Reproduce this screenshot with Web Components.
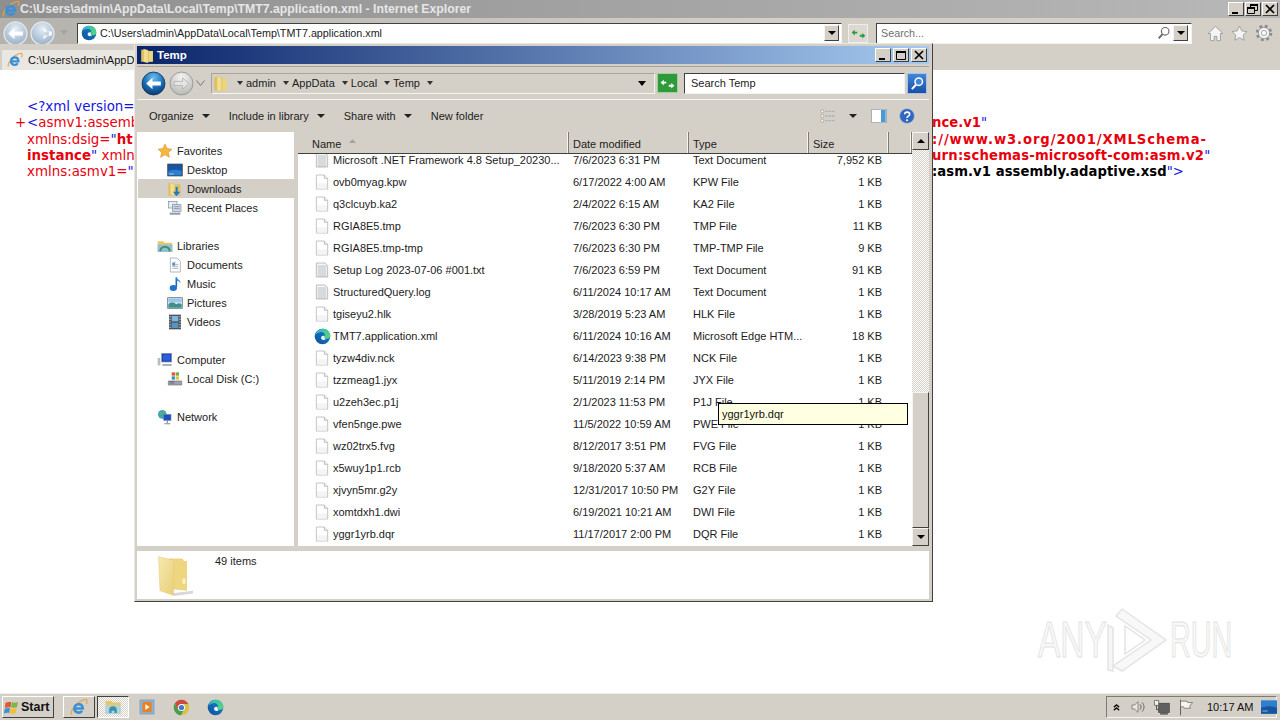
<!DOCTYPE html>
<html>
<head>
<meta charset="utf-8">
<title>TMT7.application.xml</title>
<style>
    html, body { margin: 0; padding: 0; width: 1280px; height: 720px; overflow: hidden; background: #fff; }
    body { display: flex; flex-direction: column; font-family: "Liberation Sans", sans-serif; }
</style>
</head>
<body>
<ie-window>
    <explorer-window slot="overlay"></explorer-window>
</ie-window>
<task-bar></task-bar>

<script>
const UI_FONT = '"Liberation Sans", Arial, sans-serif';

const ICONS = {
    ie: `<path d="M2 22C0 17 9 5 20 2c3-1 3 2 2 6" fill="none" stroke="#e8a33a" stroke-width="1.600"/><path d="M17 14h-11c0-7 10-8 11-1v1zM6 14c0 6 8 7 10 3" fill="none" stroke="#3d8fd8" stroke-width="3.400"/>`,
    edge: `<defs><linearGradient id="eb" x1="0" y1="1" x2="1" y2="0"><stop offset="0" stop-color="#0b4f9e"/><stop offset="1" stop-color="#1a86d0"/></linearGradient><linearGradient id="eg" x1="0" y1="0" x2="1" y2="1"><stop offset="0" stop-color="#2fb9c9"/><stop offset="1" stop-color="#5fd86f"/></linearGradient></defs><circle cx="12" cy="12" r="11" fill="url(#eb)"/><path d="M2 10C4 3 10 1 13 1c6 0 10 5 10 10 0 3-3 5-6 4-2-.7-2-2-1.500-3.500C16 7 12 5 8.500 6 5 7 3 8 2 10z" fill="url(#eg)"/><path d="M10 14c0-3 3-4 5-2.500-.5 1.500 0 3 1.500 3.500-1 2.500-6.500 2.500-6.500-1z" fill="#eef6fb"/>`,
    chrome: `<circle cx="12" cy="12" r="11" fill="#d8c04a"/><path d="M12 1a11 11 0 0 0-9.500 5.500L7.500 15 12 7h9.500A11 11 0 0 0 12 1z" fill="#cf4a3c"/><path d="M2.500 6.500A11 11 0 0 0 11 23l4.500-8-8 0z" fill="#4a9c50"/><circle cx="12" cy="12" r="5" fill="#fff"/><circle cx="12" cy="12" r="3.700" fill="#3f78d0"/>`,
    folder: `<path d="M2 4h7l2 2h11v16H2z" fill="#dcbf62"/><path d="M6 3l8 2v19l-8-2z" fill="#f2de8e" stroke="#cdb05a" stroke-width=".5"/><path d="M15 6h7v16h-7z" fill="#eed67e"/>`,
    bigFolder: `<defs><linearGradient id="bf" x1="0" y1="0" x2="1" y2="1"><stop offset="0" stop-color="#f7eab0"/><stop offset="1" stop-color="#e8cf78"/></linearGradient></defs><path d="M9 22.500L24 21v1.500L11 24z" fill="#d8d8d8"/><path d="M8 2.500h9l1 1.500h2v17L8 20z" fill="#eed680"/><path d="M1 1.500l10 2v20l-9-2.500z" fill="url(#bf)" stroke="#e2c870" stroke-width=".3"/><path d="M17 14h2v3h-2z" fill="#f9f0c4"/>`,
    doc: `<path d="M3.500 1.500h12l5 5v16h-17z" fill="#fff" stroke="#a8a8a8"/><path d="M15.500 1.500v5h5" fill="#ececec" stroke="#a8a8a8"/><path d="M4.500 14h15v8h-15z" fill="#f4f4f4"/>`,
    txt: `<path d="M3.500 1.500h13l4 4v17h-17z" fill="#f6f6f6" stroke="#a0a0a0"/><path d="M5.500 6h13M5.500 9h13M5.500 12h13M5.500 15h13M5.500 18h13M5.500 21h13" stroke="#9aa0a8" stroke-width="1"/>`,
    star: `<path d="M12 1.500l3.200 6.800 7.300.9-5.400 5 1.500 7.300L12 17.800l-6.600 3.700 1.500-7.300-5.400-5 7.300-.9z" fill="#f4b93c" stroke="#d88a24" stroke-width=".8"/>`,
    desktop: `<rect x="1" y="3" width="22" height="18" fill="#17559f" stroke="#3f4a5c"/><path d="M2 14c6-3 14-3 20 0v6H2z" fill="#2f7fd0"/><path d="M3 18h7" stroke="#e0e8f0"/>`,
    downloads: `<path d="M2 3h7l2 2h9v17H2z" fill="#dcbf62"/><path d="M5 3l6 2v17l-6-2z" fill="#f2de8e"/><path d="M16 9v7h4l-6 7-5-7h4V9z" fill="#1d78d0"/>`,
    recent: `<rect x="2" y="2" width="13" height="10" fill="#e8eef4" stroke="#7c8a98"/><rect x="8" y="7" width="13" height="10" fill="#cfdce8" stroke="#7c8a98"/><path d="M4 19h16v3H4z" fill="#8c99a6"/><path d="M10 10h9M10 13h9" stroke="#6a7a8a"/>`,
    libraries: `<path d="M1 5h8l2 2h12v14H1z" fill="#e9c766"/><path d="M1 10h22v11H1z" fill="#8cc0dc"/><path d="M5 20a7 7 0 0 1 14 0" fill="none" stroke="#4d8f5a" stroke-width="3"/>`,
    documents: `<path d="M5 1.500h10l5 5v16H5z" fill="#fff" stroke="#8a96a4"/><path d="M8 8h5M8 11h9M8 14h9M8 17h9" stroke="#7a8ca0"/><rect x="8" y="9" width="4" height="4" fill="#5a8cc0"/>`,
    music: `<path d="M14 2v15" stroke="#1c64b8" stroke-width="2.400"/><path d="M14 2c2 4 7 4 6 9-1-3-3-4-6-4z" fill="#3f8fd8"/><ellipse cx="9.500" cy="18" rx="5.500" ry="4.500" fill="#1f74c8"/>`,
    pictures: `<rect x="1" y="4" width="22" height="16" fill="#d8e8f2" stroke="#55677a"/><path d="M2 14c5-5 8-3 12 0 3-2 5-2 8 0v5H2z" fill="#3f8f8a"/><path d="M2 5h20v6H2z" fill="#9cc8e8"/>`,
    videos: `<rect x="3" y="1" width="18" height="22" fill="#46525e"/><rect x="7" y="3" width="10" height="8" fill="#7fb6de"/><rect x="7" y="13" width="10" height="8" fill="#5a93c0"/><path d="M4.500 3v18M19.500 3v18" stroke="#e0e0e0" stroke-width="1.500" stroke-dasharray="2 2"/>`,
    computer: `<rect x="7" y="2" width="15" height="13" fill="#1d3fb4" stroke="#8a98a8"/><rect x="9" y="4" width="11" height="9" fill="#2a5fe0"/><path d="M1 9h4v11H1z" fill="#b4bcc4"/><path d="M8 18h14v3H8z" fill="#a8b0b8"/>`,
    disk: `<path d="M2 15h20v6H2z" fill="#9aa4ae" stroke="#6a747e"/><path d="M4 16h7M4 18h7" stroke="#54606a"/><rect x="7" y="2" width="5" height="5" fill="#e0592a"/><rect x="13" y="2" width="5" height="5" fill="#6ab04a"/><rect x="7" y="8" width="5" height="5" fill="#3f8fd8"/><rect x="13" y="8" width="5" height="5" fill="#f0c030"/>`,
    network: `<circle cx="8" cy="8" r="6.500" fill="#3fa0c0"/><path d="M4 5c2-1 4 0 4 2s-3 2-4 1zM9 3c2 0 3 1 4 3l-3 1z" fill="#5cb85c"/><rect x="10" y="8" width="11" height="9" fill="#1c4fc0" stroke="#7c8a9a"/><path d="M15.500 17v4M11 22h9" stroke="#7c8a9a" stroke-width="1.600"/>`,
    back: `<defs><radialGradient id="bk" cx=".5" cy=".25" r=".8"><stop offset="0" stop-color="#6cc0ee"/><stop offset=".55" stop-color="#1b6cb4"/><stop offset="1" stop-color="#0b2f66"/></radialGradient></defs><circle cx="12" cy="12" r="11" fill="url(#bk)" stroke="#0b3560" stroke-width=".8"/><path d="M5 12l6-5.500V10h8v4h-8v3.500z" fill="#fff"/>`,
    forward: `<defs><radialGradient id="fw" cx=".5" cy=".25" r=".8"><stop offset="0" stop-color="#f4f4f4"/><stop offset="1" stop-color="#b4b4b0"/></radialGradient></defs><circle cx="12" cy="12" r="11" fill="url(#fw)" stroke="#909090" stroke-width=".8"/><path d="M19 12l-6-5.500V10H5v4h8v3.500z" fill="#e4e4e4" stroke="#a0a0a0" stroke-width=".6"/>`,
    ieback: `<defs><radialGradient id="ib" cx=".5" cy=".3" r=".8"><stop offset="0" stop-color="#e4eef6"/><stop offset="1" stop-color="#8fa8c0"/></radialGradient></defs><circle cx="12" cy="12" r="11" fill="url(#ib)" stroke="#dfe6ec" stroke-width="1.400"/><path d="M5 12l6-5.500V10h8v4h-8v3.500z" fill="#fff"/>`,
    ieforward: `<defs><radialGradient id="if" cx=".5" cy=".3" r=".8"><stop offset="0" stop-color="#e4eef6"/><stop offset="1" stop-color="#8fa8c0"/></radialGradient></defs><circle cx="12" cy="12" r="11" fill="url(#if)" stroke="#dfe6ec" stroke-width="1.400"/><path d="M19 12l-6-5.500V10h8v4h-8v3.500z" fill="#fff"/>`,
    arrows: `<path d="M10 9H6V6l-5 4.500L6 15v-3h4z" fill="#2e9a3a"/><path d="M14 15h4v3l5-4.500L18 9v3h-4z" transform="translate(0 2)" fill="#2e9a3a"/>`,
    arrowsWhite: `<path d="M10 9H6V6l-5 4.500L6 15v-3h4z" fill="#fff"/><path d="M14 15h4v3l5-4.500L18 9v3h-4z" transform="translate(0 2)" fill="#fff"/>`,
    glass: `<circle cx="14" cy="9" r="6.500" fill="#fff" fill-opacity=".5" stroke="#6a6a6a" stroke-width="2"/><path d="M9.500 14L3 21" stroke="#6a6a6a" stroke-width="3.200"/>`,
    glassWhite: `<circle cx="14" cy="9" r="6" fill="#3f86d8" stroke="#fff" stroke-width="2.400"/><path d="M9.500 14L3 21" stroke="#fff" stroke-width="3.200"/>`,
    home: `<path d="M12 2L1.500 12H5v10h5v-6h4v6h5V12h3.500z" fill="#f4f4f4" stroke="#8c8c8c"/>`,
    favstar: `<path d="M12 1.500l3.200 6.800 7.300.9-5.400 5 1.500 7.300L12 17.800l-6.600 3.700 1.500-7.300-5.400-5 7.300-.9z" fill="#f4f4f4" stroke="#8c8c8c"/>`,
    gear: `<circle cx="12" cy="12" r="8.500" fill="none" stroke="#8c8c8c" stroke-width="5" stroke-dasharray="3.340 3.340"/><circle cx="12" cy="12" r="7.500" fill="#f4f4f4" stroke="#8c8c8c"/><circle cx="12" cy="12" r="3.500" fill="#fff" stroke="#8c8c8c"/>`,
    views: `<path d="M1.500 3h4v4h-4zM1.500 10h4v4h-4zM1.500 17h4v4h-4z" fill="#fff" stroke="#a09c90"/><path d="M8 5h15M8 12h15M8 19h15" stroke="#a8b4c0" stroke-width="2" stroke-dasharray="4 1"/>`,
    pane: `<rect x="1" y="2" width="22" height="20" fill="#fff" stroke="#8a9aa8"/><rect x="15" y="3" width="7" height="18" fill="#4d9ad0"/>`,
    help: `<circle cx="12" cy="12" r="11" fill="#3068c0" stroke="#a8b8d0"/><path d="M8.500 9.500c0-4.500 7.500-4.500 7.500 0 0 3-4 2.500-4 5.500" fill="none" stroke="#fff" stroke-width="2.400"/><circle cx="12" cy="18.500" r="1.500" fill="#fff"/>`,
    flag: `<path d="M2 6c3-2 6-2 9-1l-1.500 8c-3-1-5-.5-8 1z" fill="#e2582c"/><path d="M12 5c3 1 6 1 9-.5L19.500 12c-3 1.500-6 1.500-9 .5z" fill="#7ab648"/><path d="M1 15c3-1.500 5-2 8-1l-1.200 7c-3-1-5-.5-8 1z" fill="#3f8fd8"/><path d="M10 14c3 1 6 1 9-.5L17.500 21c-3 1.500-6 1.500-9 .5z" fill="#f0c030"/>`,
    explorer: `<path d="M2 4h8l2 2h10v15H2z" fill="#e5c868"/><path d="M2 10h20v11H2z" fill="#a8d4e8"/><path d="M7 20v-4a5 5 0 0 1 10 0v4h-3v-3h-4v3z" fill="#3f8fa8"/>`,
    media: `<rect x="1.500" y="1.500" width="21" height="21" fill="#8cb4dc" stroke="#6c94c0"/><rect x="5" y="4" width="14" height="16" rx="2" fill="#e8821e"/><path d="M9.500 8v8l6.500-4z" fill="#fff"/>`,
    chevrons: `<path d="M5 11l7-6 7 6M5 19l7-6 7 6" fill="none" stroke="#111" stroke-width="3.600"/>`,
    speaker: `<path d="M3 9h4l5-5v16l-5-5H3z" fill="#e8e8e4" stroke="#606060"/><path d="M15 8c2 2 2 6 0 8M18 5c4 4 4 10 0 14" fill="none" stroke="#606060" stroke-width="1.400"/>`,
    netTray: `<rect x="8" y="6" width="15" height="13" fill="#606060" stroke="#404040"/><path d="M2 2h6v7H2z" fill="#f0f0e8" stroke="#505050"/><path d="M5 9v6h5" fill="none" stroke="#505050" stroke-width="1.400"/><path d="M10 21h11" stroke="#505050" stroke-width="2"/>`,
    flagTray: `<path d="M5 1v22" stroke="#606060" stroke-width="1.400"/><path d="M5 3h9l1 2h7l-4 5 1 3h-9l-1-2H5z" fill="#f4f4f0" stroke="#606060"/>`,
    showDesktop: `<rect x="0" y="2" width="24" height="20" fill="#2f7fd0"/><path d="M0 13c8-3 16-3 24 0v9H0z" fill="#15569f"/><path d="M2 18h8" stroke="#d8e4f0"/>`
};

// draws one icon from the map above
class WinIcon extends HTMLElement {
    connectedCallback() {
        const size = this.getAttribute('size') || 16;
        const height = this.getAttribute('height') || size;
        const root = this.attachShadow({mode: 'open'});
        root.innerHTML = `
            <style>
                :host { display: inline-flex; flex: none; line-height: 0; }
            </style>
            <svg width="${size}" height="${height}" viewBox="0 0 24 24" preserveAspectRatio="none">${ICONS[this.getAttribute('name')] || ''}</svg>
        `;
    }
}

// raised 3D caption button, min / max / restore / close
class CaptionButton extends HTMLElement {
    connectedCallback() {
        const kind = this.getAttribute('kind');
        const glyphs = {
            min: '<path d="M3 9h6v2H3z" fill="#000"/>',
            max: '<path d="M2.500 2.500h9v8h-9z" fill="none" stroke="#000"/><path d="M2 2h10v2H2z" fill="#000"/>',
            restore: '<path d="M4.500 1.500h7v6h-7z" fill="none" stroke="#000"/><path d="M4 1h8v2H4z" fill="#000"/><path d="M1.500 4.500h7v6h-7z" fill="#d4d0c8" stroke="#000"/><path d="M1 4h8v2H1z" fill="#000"/>',
            close: '<path d="M3 2l8 8M11 2l-8 8" stroke="#000" stroke-width="1.700"/>'
        };
        this.attachShadow({mode: 'open'}).innerHTML = `
            <style>
                :host {
                    display: flex;
                    align-items: center;
                    justify-content: center;
                    width: 16px;
                    height: 14px;
                    background: #d4d0c8;
                    box-sizing: border-box;
                    border: 1px solid;
                    border-color: #fff #404040 #404040 #fff;
                }
            </style>
            <svg width="14" height="12" viewBox="0 0 14 12">${glyphs[kind]}</svg>
        `;
    }
}

// small dropdown button with a black triangle
class DropButton extends HTMLElement {
    connectedCallback() {
        this.attachShadow({mode: 'open'}).innerHTML = `
            <style>
                :host {
                    display: flex;
                    flex: none;
                    align-items: center;
                    justify-content: center;
                    width: 15px;
                    height: 16px;
                    box-sizing: border-box;
                    background: #d4d0c8;
                    border: 1px solid;
                    border-color: #f4f4f4 #404040 #404040 #f4f4f4;
                }
                i { border: 4px solid transparent; border-top: 4px solid #000; border-bottom: 0; width: 0; height: 0; }
            </style>
            <i></i>
        `;
    }
}

// the xml document behind the explorer window
class XmlView extends HTMLElement {
    connectedCallback() {
        this.attachShadow({mode: 'open'}).innerHTML = `
            <style>
                :host {
                    display: block;
                    flex: 1;
                    min-height: 0;
                    background: #fff;
                    padding-top: 29px;
                    font: 13.400px/16.300px "DejaVu Sans", Verdana, sans-serif;
                    color: #e8000c;
                    overflow: hidden;
                }
                .row { display: grid; grid-template-columns: 932px auto; white-space: nowrap; }
                .left { padding-left: 27px; position: relative; overflow: hidden; }
                .plus { position: absolute; left: 15px; }
                .right { font-size: 13.200px; }
                b { font-weight: bold; }
                .blue { color: #1414e0; }
                .black { color: #000; font-weight: bold; letter-spacing: .07px; }
            </style>
            <div class="row"><div class="left"><span class="blue">&lt;?xml version=</span></div><div></div></div>
            <div class="row"><div class="left"><span class="plus">+</span><span class="blue">&lt;</span>asmv1:assemb</div><div class="right"><b>nce.v1</b><span class="blue">"</span></div></div>
            <div class="row"><div class="left">xmlns:dsig=<span class="blue">"</span><b>ht</b></div><div class="right"><b style="letter-spacing:.9px">://www.w3.org/2001/XMLSchema-</b></div></div>
            <div class="row"><div class="left"><b>instance</b><span class="blue">"</span> xmln</div><div class="right"><b style="letter-spacing:.2px">urn:schemas-microsoft-com:asm.v2</b><span class="blue">"</span></div></div>
            <div class="row"><div class="left">xmlns:asmv1=<span class="blue">"</span></div><div class="right"><span class="black">:asm.v1 assembly.adaptive.xsd</span><span class="blue">"&gt;</span></div></div>
        `;
    }
}

// internet explorer frame, chrome on top and the document below
class IeWindow extends HTMLElement {
    connectedCallback() {
        this.attachShadow({mode: 'open'}).innerHTML = `
            <style>
                :host {
                    display: flex;
                    flex-direction: column;
                    position: relative;
                    width: 1280px;
                    height: 693px;
                    font-family: ${UI_FONT};
                }
                .title {
                    display: flex;
                    align-items: center;
                    height: 18px;
                    padding: 0 2px;
                    gap: 0;
                    background: linear-gradient(90deg, #8f8f8f, #b8b8b8);
                    color: #e6e6e6;
                    font-size: 12.250px;
                    font-weight: bold;
                }
                .title .text { flex: 1; white-space: nowrap; }
                .caps { display: flex; gap: 1px; margin-right: 0; }
                .tools {
                    display: flex;
                    align-items: center;
                    box-sizing: border-box;
                    height: 26px;
                    padding: 4px 0 0 3px;
                    background: linear-gradient(90deg, #b4b2ac, #d4d0c8 60%);
                }
                .field {
                    display: flex;
                    align-items: center;
                    box-sizing: border-box;
                    height: 21px;
                    background: #fff;
                    border: 1px solid;
                    border-color: #404040 #f4f4f4 #f4f4f4 #404040;
                    font-size: 10.750px;
                    color: #222;
                    white-space: nowrap;
                }
                .addr { width: 765px; margin-left: 4px; padding: 0 2px 0 3px; gap: 3px; }
                .addr span, .search span { flex: 1; }
                .search { width: 316px; margin-left: 8px; padding: 0 3px 0 4px; gap: 2px; }
                .search span { color: #707070; }
                .refresh { margin-left: 6px; width: 20px; height: 19px; display: flex; align-items: center; justify-content: center; background: #dcd9d2; border: 1px solid #eee; box-sizing: border-box; }
                .end { display: flex; align-items: center; gap: 7px; margin-left: 15px; }
                .tabs { display: flex; align-items: flex-end; height: 26px; background: #d4d0c8; }
                .tab {
                    display: flex;
                    align-items: center;
                    gap: 5px;
                    width: 132px;
                    height: 20px;
                    margin-left: 2px;
                    padding-left: 5px;
                    box-sizing: border-box;
                    background: #e9e7e2;
                    font-size: 11px;
                    color: #111;
                    white-space: nowrap;
                }
            </style>
            <div class="title">
                <win-icon name="ie" size="18"></win-icon>
                <span class="text">C:\\Users\\admin\\AppData\\Local\\Temp\\TMT7.application.xml - Internet Explorer</span>
                <div class="caps">
                    <caption-button kind="min"></caption-button>
                    <caption-button kind="restore"></caption-button>
                    <caption-button kind="close"></caption-button>
                </div>
            </div>
            <div class="tools">
                <win-icon name="ieback" size="25"></win-icon>
                <win-icon name="ieforward" size="25" style="margin-left:2px"></win-icon>
                <svg width="16" height="8" viewBox="0 0 16 8" style="margin-left:2px"><path d="M3 1l4 5 4-5z" fill="#a8a49c"/></svg>
                <div class="field addr">
                    <win-icon name="edge" size="16"></win-icon>
                    <span>C:\\Users\\admin\\AppData\\Local\\Temp\\TMT7.application.xml</span>
                    <drop-button></drop-button>
                </div>
                <div class="refresh"><win-icon name="arrows" size="15"></win-icon></div>
                <div class="field search">
                    <span>Search...</span>
                    <win-icon name="glass" size="14"></win-icon>
                    <drop-button></drop-button>
                </div>
                <div class="end">
                    <win-icon name="home" size="17"></win-icon>
                    <win-icon name="favstar" size="17"></win-icon>
                    <win-icon name="gear" size="18"></win-icon>
                </div>
            </div>
            <div class="tabs">
                <div class="tab"><win-icon name="ie" size="16"></win-icon><span>C:\\Users\\admin\\AppD</span></div>
            </div>
            <xml-view></xml-view>
            <slot name="overlay"></slot>
            <any-run-mark></any-run-mark>
        `;
    }
}

// watermark, lies over the document
class AnyRunMark extends HTMLElement {
    connectedCallback() {
        this.attachShadow({mode: 'open'}).innerHTML = `
            <style>
                :host {
                    position: absolute;
                    left: 1038px;
                    top: 608px;
                    display: flex;
                    align-items: center;
                    height: 64px;
                }
                span {
                    display: inline-block;
                    font: 50px/64px "Liberation Sans", sans-serif;
                    color: #f8f8f8;
                    -webkit-text-stroke: 1px #e2e2e2;
                    transform-origin: 0 50%;
                    white-space: nowrap;
                }
                .any { width: 69px; transform: scaleX(.67); }
                .run { width: 62px; margin-left: 3px; transform: scaleX(.575); }
                svg { flex: none; }
            </style>
            <span class="any">ANY</span>
            <svg width="60" height="64" viewBox="0 0 60 64" fill="none" stroke="#e4e4e4" stroke-width="1.500">
                <path d="M1 17v45l5 1V20z" fill="#f6f6f6"/>
                <path d="M15 1L59 32 15 63 6 58 44 32 9 8z" fill="#f8f8f8"/>
                <path d="M18 18v28l20-14z" fill="#fff"/>
            </svg>
            <span class="run">RUN</span>
        `;
    }
}

class NavItem extends HTMLElement {
    connectedCallback() {
        const child = this.hasAttribute('child');
        const selected = this.hasAttribute('selected');
        this.attachShadow({mode: 'open'}).innerHTML = `
            <style>
                :host {
                    display: flex;
                    align-items: center;
                    height: 19px;
                    padding-left: ${child ? 29 : 19}px;
                    gap: 4px;
                    white-space: nowrap;
                    background: ${selected ? '#d4d0c8' : 'transparent'};
                }
            </style>
            <win-icon name="${this.getAttribute('icon')}" size="16"></win-icon>
            <slot></slot>
        `;
    }
}

class NavPane extends HTMLElement {
    connectedCallback() {
        this.attachShadow({mode: 'open'}).innerHTML = `
            <style>
                :host {
                    display: block;
                    flex: none;
                    box-sizing: border-box;
                    width: 157px;
                    padding: 9px 0 0 1px;
                    background: #fff;
                    overflow: hidden;
                }
                .group { margin-bottom: 19px; }
            </style>
            <div class="group">
                <nav-item icon="star">Favorites</nav-item>
                <nav-item child icon="desktop">Desktop</nav-item>
                <nav-item child selected icon="downloads">Downloads</nav-item>
                <nav-item child icon="recent">Recent Places</nav-item>
            </div>
            <div class="group">
                <nav-item icon="libraries">Libraries</nav-item>
                <nav-item child icon="documents">Documents</nav-item>
                <nav-item child icon="music">Music</nav-item>
                <nav-item child icon="pictures">Pictures</nav-item>
                <nav-item child icon="videos">Videos</nav-item>
            </div>
            <div class="group">
                <nav-item icon="computer">Computer</nav-item>
                <nav-item child icon="disk">Local Disk (C:)</nav-item>
            </div>
            <div class="group">
                <nav-item icon="network">Network</nav-item>
            </div>
        `;
    }
}

const COLUMNS = '271px 120px 120px 80px';

class ColumnHeader extends HTMLElement {
    connectedCallback() {
        this.attachShadow({mode: 'open'}).innerHTML = `
            <style>
                :host {
                    display: grid;
                    grid-template-columns: ${COLUMNS} 1fr;
                    flex: none;
                    height: 22px;
                    background: #d4d0c8;
                    border-bottom: 1px solid #404040;
                    box-sizing: border-box;
                }
                div {
                    display: flex;
                    align-items: center;
                    gap: 8px;
                    padding: 2px 0 0 4px;
                    box-sizing: border-box;
                    border-right: 1px solid #807c74;
                    box-shadow: inset -1px 0 #f4f4f4;
                }
                .name { padding-left: 14px; }
                svg { margin-bottom: 6px; }
            </style>
            <div class="name">Name <svg width="7" height="4" viewBox="0 0 7 4"><path d="M0 4l3.500-4L7 4z" fill="#a8a49c"/></svg></div>
            <div>Date modified</div>
            <div>Type</div>
            <div>Size</div>
            <div></div>
        `;
    }
}

class FileRow extends HTMLElement {
    connectedCallback() {
        const icon = this.getAttribute('icon') || 'doc';
        const big = icon === 'edge';
        this.attachShadow({mode: 'open'}).innerHTML = `
            <style>
                :host {
                    display: grid;
                    grid-template-columns: ${COLUMNS};
                    align-items: center;
                    height: 22px;
                    white-space: nowrap;
                }
                .name { display: flex; align-items: center; gap: ${big ? 2 : 3}px; padding-left: 16px; }
                .size { text-align: right; padding-right: 7px; }
                .date, .type { padding-left: 4px; }
            </style>
            <div class="name"><win-icon name="${icon}" size="${big ? 17 : 16}"></win-icon><span>${this.getAttribute('name')}</span></div>
            <div class="date">${this.getAttribute('date')}</div>
            <div class="type">${this.getAttribute('type')}</div>
            <div class="size">${this.getAttribute('size')}</div>
        `;
    }
}

const FILES = [
    ['Microsoft .NET Framework 4.8 Setup_20230...', '7/6/2023 6:31 PM', 'Text Document', '7,952 KB', 'txt'],
    ['ovb0myag.kpw', '6/17/2022 4:00 AM', 'KPW File', '1 KB'],
    ['q3clcuyb.ka2', '2/4/2022 6:15 AM', 'KA2 File', '1 KB'],
    ['RGIA8E5.tmp', '7/6/2023 6:30 PM', 'TMP File', '11 KB'],
    ['RGIA8E5.tmp-tmp', '7/6/2023 6:30 PM', 'TMP-TMP File', '9 KB'],
    ['Setup Log 2023-07-06 #001.txt', '7/6/2023 6:59 PM', 'Text Document', '91 KB', 'txt'],
    ['StructuredQuery.log', '6/11/2024 10:17 AM', 'Text Document', '1 KB', 'txt'],
    ['tgiseyu2.hlk', '3/28/2019 5:23 AM', 'HLK File', '1 KB'],
    ['TMT7.application.xml', '6/11/2024 10:16 AM', 'Microsoft Edge HTM...', '18 KB', 'edge'],
    ['tyzw4div.nck', '6/14/2023 9:38 PM', 'NCK File', '1 KB'],
    ['tzzmeag1.jyx', '5/11/2019 2:14 PM', 'JYX File', '1 KB'],
    ['u2zeh3ec.p1j', '2/1/2023 11:53 PM', 'P1J File', '1 KB'],
    ['vfen5nge.pwe', '11/5/2022 10:59 AM', 'PWE File', '1 KB'],
    ['wz02trx5.fvg', '8/12/2017 3:51 PM', 'FVG File', '1 KB'],
    ['x5wuy1p1.rcb', '9/18/2020 5:37 AM', 'RCB File', '1 KB'],
    ['xjvyn5mr.g2y', '12/31/2017 10:50 PM', 'G2Y File', '1 KB'],
    ['xomtdxh1.dwi', '6/19/2021 10:21 AM', 'DWI File', '1 KB'],
    ['yggr1yrb.dqr', '11/17/2017 2:00 PM', 'DQR File', '1 KB']
];

class FileList extends HTMLElement {
    connectedCallback() {
        const rows = FILES.map(([name, date, type, size, icon]) =>
            `<file-row name="${name}" date="${date}" type="${type}" size="${size}" icon="${icon || 'doc'}"></file-row>`).join('');
        this.attachShadow({mode: 'open'}).innerHTML = `
            <style>
                :host {
                    display: flex;
                    flex-direction: column;
                    flex: 1;
                    min-width: 0;
                    background: #fff;
                    overflow: hidden;
                }
                .rows { flex: 1; min-height: 0; overflow: hidden; }
                .rows > :first-child { margin-top: -5px; }
            </style>
            <column-header></column-header>
            <div class="rows">${rows}</div>
        `;
    }
}

class ScrollBar extends HTMLElement {
    connectedCallback() {
        this.attachShadow({mode: 'open'}).innerHTML = `
            <style>
                :host {
                    display: flex;
                    flex-direction: column;
                    flex: none;
                    width: 17px;
                    background: repeating-conic-gradient(#d4d0c8 0 25%, #fff 0 50%) 0 0 / 2px 2px;
                }
                .btn, .thumb {
                    box-sizing: border-box;
                    background: #d4d0c8;
                    border: 1px solid;
                    border-color: #f4f4f4 #404040 #404040 #f4f4f4;
                }
                .btn { display: flex; align-items: center; justify-content: center; height: 18px; flex: none; }
                .track { flex: 1; display: flex; flex-direction: column; }
                .thumb { height: 136px; margin-top: auto; }
                .up { border: 4px solid transparent; border-bottom: 4px solid #000; border-top: 0; width: 0; height: 0; }
                .down { border: 4px solid transparent; border-top: 4px solid #000; border-bottom: 0; width: 0; height: 0; }
            </style>
            <div class="btn"><i class="up"></i></div>
            <div class="track"><div class="thumb"></div></div>
            <div class="btn"><i class="down"></i></div>
        `;
    }
}

class ExplorerWindow extends HTMLElement {
    connectedCallback() {
        this.attachShadow({mode: 'open'}).innerHTML = `
            <style>
                :host {
                    position: absolute;
                    left: 134px;
                    top: 43px;
                    width: 799px;
                    height: 559px;
                    box-sizing: border-box;
                    display: flex;
                    flex-direction: column;
                    padding: 2px 3px 2px 2px;
                    background: #d4d0c8;
                    border: 1px solid;
                    border-color: #e8e8e4 #404040 #404040 #e8e8e4;
                    font: 11px ${UI_FONT};
                    color: #1c1c1c;
                }
                .title {
                    display: flex;
                    align-items: center;
                    flex: none;
                    height: 18px;
                    gap: 3px;
                    padding-left: 3px;
                    padding-right: 2px;
                    background: linear-gradient(90deg, #0a246a, #a6caf0);
                    color: #fff;
                    font-size: 11.500px;
                    font-weight: bold;
                }
                .title span { flex: 1; }
                .caps { display: flex; gap: 2px; }
                .nav {
                    display: flex;
                    align-items: center;
                    flex: none;
                    height: 34px;
                    margin-top: 2px;
                    box-sizing: border-box;
                    padding-left: 4px;
                    border-top: 1px solid #a8a49c;
                    border-bottom: 1px solid #f4f4f4;
                }
                .crumbs {
                    display: flex;
                    align-items: center;
                    flex: none;
                    width: 444px;
                    height: 21px;
                    margin-left: 5px;
                    box-sizing: border-box;
                    padding-left: 1px;
                    border: 1px solid;
                    border-color: #a8a49c #f4f4f4 #f4f4f4 #a8a49c;
                    white-space: nowrap;
                }
                .crumbs i { flex: none; border: 3px solid transparent; border-top: 4px solid #333; border-bottom: 0; width: 0; height: 0; margin: 0 3px 0 7px; }
                .crumbs .drop { margin: 0 8px 0 auto; border-width: 4px; border-top: 5px solid #000; }
                .crumbs win-icon { margin-right: 2px; }
                .go {
                    display: flex;
                    align-items: center;
                    justify-content: center;
                    flex: none;
                    width: 21px;
                    height: 20px;
                    margin-left: 2px;
                    background: #2f9a38;
                    border: 1px solid #9ed0a0;
                    box-sizing: border-box;
                }
                .find {
                    display: flex;
                    align-items: center;
                    flex: none;
                    width: 221px;
                    height: 21px;
                    margin-left: 6px;
                    padding-left: 6px;
                    box-sizing: border-box;
                    background: #fff;
                    border: 1px solid;
                    border-color: #404040 #f4f4f4 #f4f4f4 #404040;
                }
                .find-btn {
                    display: flex;
                    align-items: center;
                    justify-content: center;
                    flex: none;
                    width: 20px;
                    height: 21px;
                    margin-left: 2px;
                    box-sizing: border-box;
                    background: linear-gradient(#3f86d8, #1a4fa8);
                    border: 1px solid #a8c4e4;
                }
                .toolbar {
                    display: flex;
                    align-items: center;
                    flex: none;
                    height: 32px;
                    padding-left: 12px;
                    padding-right: 14px;
                    white-space: nowrap;
                }
                .cmd { display: flex; align-items: center; gap: 8px; margin-right: 19px; }
                .cmd i { border: 4px solid transparent; border-top: 4px solid #222; border-bottom: 0; width: 0; height: 0; }
                .toolbar .spacer { flex: 1; }
                .toolbar .tri { border: 4px solid transparent; border-top: 4px solid #222; border-bottom: 0; width: 0; height: 0; margin: 0 14px 0 13px; }
                .body { display: flex; flex: 1; min-height: 0; }
                .split { flex: none; width: 4px; background: #d4d0c8; }
                .status {
                    display: flex;
                    flex: none;
                    height: 48px;
                    margin-top: 5px;
                    background: #fff;
                    box-sizing: border-box;
                    padding: 3px 0 0 20px;
                }
                .status .count { margin-left: 22px; padding-top: 1px; }
                .tip {
                    position: absolute;
                    left: 583px;
                    top: 359px;
                    width: 190px;
                    height: 22px;
                    box-sizing: border-box;
                    padding-left: 3px;
                    display: flex;
                    align-items: center;
                    background: #ffffe1;
                    border: 1px solid #000;
                    color: #111;
                }
            </style>
            <div class="title">
                <win-icon name="folder" size="14" height="16"></win-icon>
                <span>Temp</span>
                <div class="caps">
                    <caption-button kind="min"></caption-button>
                    <caption-button kind="max"></caption-button>
                    <caption-button kind="close"></caption-button>
                </div>
            </div>
            <div class="nav">
                <win-icon name="back" size="25"></win-icon>
                <win-icon name="forward" size="25" style="margin-left:3px"></win-icon>
                <svg width="11" height="8" viewBox="0 0 11 8" style="margin-left:1px"><path d="M1.500 1.500l4 5 4-5" fill="none" stroke="#777"/></svg>
                <div class="crumbs">
                    <win-icon name="folder" size="15" height="18"></win-icon>
                    <i></i>admin<i></i>AppData<i></i>Local<i></i>Temp<i></i>
                    <i class="drop"></i>
                </div>
                <div class="go"><win-icon name="arrowsWhite" size="15"></win-icon></div>
                <div class="find">Search Temp</div>
                <div class="find-btn"><win-icon name="glassWhite" size="15"></win-icon></div>
            </div>
            <div class="toolbar">
                <div class="cmd">Organize <i></i></div>
                <div class="cmd">Include in library <i></i></div>
                <div class="cmd">Share with <i></i></div>
                <div class="cmd">New folder</div>
                <div class="spacer"></div>
                <win-icon name="views" size="16"></win-icon>
                <div class="tri"></div>
                <win-icon name="pane" size="16"></win-icon>
                <win-icon name="help" size="16" style="margin-left:12px"></win-icon>
            </div>
            <div class="body">
                <nav-pane></nav-pane>
                <div class="split"></div>
                <file-list></file-list>
                <scroll-bar></scroll-bar>
            </div>
            <div class="status">
                <win-icon name="bigFolder" size="36" height="42"></win-icon>
                <div class="count">49 items</div>
            </div>
            <div class="tip">yggr1yrb.dqr</div>
        `;
    }
}

class TaskBar extends HTMLElement {
    connectedCallback() {
        this.attachShadow({mode: 'open'}).innerHTML = `
            <style>
                :host {
                    display: flex;
                    align-items: center;
                    flex: none;
                    box-sizing: border-box;
                    width: 1280px;
                    height: 27px;
                    padding: 0 3px 0 2px;
                    background: #d4d0c8;
                    border-top: 1px solid #f0eee9;
                    font: 11px ${UI_FONT};
                    color: #111;
                }
                .start {
                    display: flex;
                    align-items: center;
                    gap: 1px;
                    width: 52px;
                    height: 22px;
                    padding-left: 1px;
                    box-sizing: border-box;
                    background: #d4d0c8;
                    border: 1px solid;
                    border-color: #fff #404040 #404040 #fff;
                    font-weight: bold;
                    font-size: 12.500px;
                }
                .task {
                    display: flex;
                    align-items: center;
                    justify-content: center;
                    width: 32px;
                    height: 22px;
                    box-sizing: border-box;
                    border: 1px solid;
                    border-color: #fff #404040 #404040 #fff;
                }
                .task.ie { margin-left: 9px; }
                .task.on {
                    margin-left: 2px;
                    border-color: #404040 #fff #fff #404040;
                    background: repeating-conic-gradient(#d4d0c8 0 25%, #fff 0 50%) 0 0 / 2px 2px;
                }
                .plain { display: flex; justify-content: center; width: 34px; }
                .plain.first { margin-left: 1px; }
                .spacer { flex: 1; }
                .tray {
                    display: flex;
                    align-items: center;
                    width: 171px;
                    height: 22px;
                    box-sizing: border-box;
                    padding-left: 5px;
                    border: 1px solid;
                    border-color: #807c74 #f4f4f4 #f4f4f4 #807c74;
                    white-space: nowrap;
                }
                .tray .time { margin-left: 13px; }
            </style>
            <div class="start"><win-icon name="flag" size="16"></win-icon>Start</div>
            <div class="task ie"><win-icon name="ie" size="18"></win-icon></div>
            <div class="task on"><win-icon name="explorer" size="18"></win-icon></div>
            <div class="plain first"><win-icon name="media" size="16"></win-icon></div>
            <div class="plain"><win-icon name="chrome" size="17"></win-icon></div>
            <div class="plain"><win-icon name="edge" size="17"></win-icon></div>
            <div class="spacer"></div>
            <div class="tray">
                <win-icon name="chevrons" size="9"></win-icon>
                <win-icon name="speaker" size="16" style="margin-left:9px"></win-icon>
                <win-icon name="netTray" size="17" style="margin-left:7px"></win-icon>
                <win-icon name="flagTray" size="17" style="margin-left:7px"></win-icon>
                <span class="time">10:17 AM</span>
                <win-icon name="showDesktop" size="16" style="margin-left:8px"></win-icon>
            </div>
        `;
    }
}

customElements.define('win-icon', WinIcon);
customElements.define('caption-button', CaptionButton);
customElements.define('drop-button', DropButton);
customElements.define('xml-view', XmlView);
customElements.define('any-run-mark', AnyRunMark);
customElements.define('nav-item', NavItem);
customElements.define('nav-pane', NavPane);
customElements.define('column-header', ColumnHeader);
customElements.define('file-row', FileRow);
customElements.define('file-list', FileList);
customElements.define('scroll-bar', ScrollBar);
customElements.define('explorer-window', ExplorerWindow);
customElements.define('task-bar', TaskBar);
customElements.define('ie-window', IeWindow);
</script>
</body>
</html>
